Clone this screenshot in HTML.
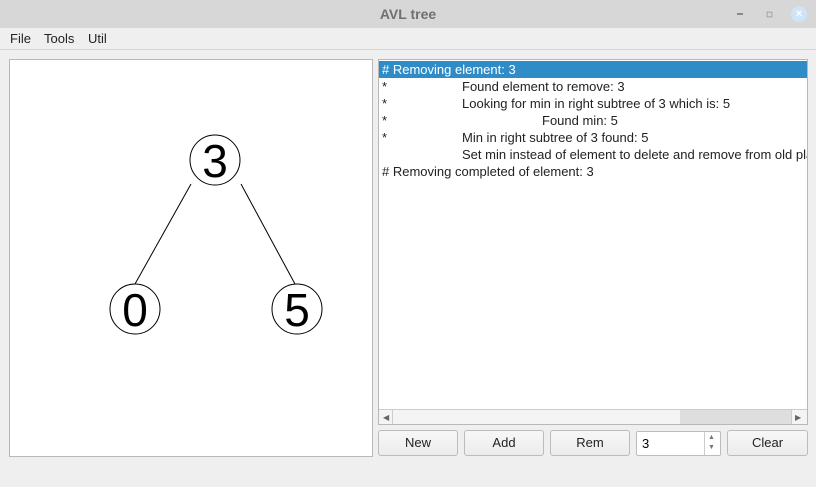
<!DOCTYPE html>
<html><head><style>
body{margin:0;width:816px;height:487px;background:#efefef;font-family:"Liberation Sans",sans-serif;position:relative;overflow:hidden}
.a{position:absolute}
.title{left:0;top:0;width:816px;height:28px;background:#d7d7d7;text-align:center;line-height:28px;font-weight:bold;font-size:14px;color:#707070}
.menu{top:28px;left:0;width:816px;height:21px;border-bottom:1px solid #d4d4d4;font-size:13px;color:#222}
.menu span{position:absolute;top:3px}
.panel{background:#fff;border:1px solid #b8b8b8}
.row{position:absolute;left:0;height:17px;line-height:17px;font-size:13px;color:#222;white-space:nowrap;width:428px}
.btn{top:430px;height:24px;border:1px solid #bcbcbc;border-radius:3px;background:linear-gradient(#f7f7f7,#ececec);font-size:13px;text-align:center;line-height:24px;color:#222}
</style></head><body>
<div class="a title">AVL tree</div>
<div class="a" style="left:737px;top:13px;width:6px;height:2px;background:#888"></div>
<div class="a" style="left:766px;top:11px;width:5px;height:5px;border:1px solid #999;transform:scale(.8)"></div>
<div class="a" style="left:791px;top:6px;width:16px;height:16px;border-radius:8px;background:#cfe5f7;color:#fff;font-size:11px;text-align:center;line-height:16px;font-weight:bold">×</div>
<div class="a menu"><span style="left:10px">File</span><span style="left:44px">Tools</span><span style="left:88px">Util</span></div>
<div class="a panel" style="left:9px;top:59px;width:362px;height:396px">
<svg width="362" height="396" style="position:absolute;left:0;top:0">
<g stroke="#000" stroke-width="1" fill="#fff">
<line x1="181" y1="124" x2="125" y2="224"/><line x1="231" y1="124" x2="285" y2="224"/>
<circle cx="205" cy="100" r="25"/><circle cx="125" cy="249" r="25"/><circle cx="287" cy="249" r="25"/>
</g>
<g font-family="Liberation Sans, sans-serif" font-size="46" text-anchor="middle" fill="#000">
<text x="205" y="117">3</text><text x="125" y="266">0</text><text x="287" y="266">5</text>
</g></svg></div>
<div class="a panel" style="left:378px;top:59px;width:428px;height:364px;overflow:hidden">
<div class="row" style="top:1px;background:#308cc6;color:#fff"><span class="a" style="left:3px"># Removing element: 3</span></div>
<div class="row" style="top:18px"><span class="a" style="left:3px">*</span><span class="a" style="left:83px">Found element to remove: 3</span></div>
<div class="row" style="top:35px"><span class="a" style="left:3px">*</span><span class="a" style="left:83px">Looking for min in right subtree of 3 which is: 5</span></div>
<div class="row" style="top:52px"><span class="a" style="left:3px">*</span><span class="a" style="left:163px">Found min: 5</span></div>
<div class="row" style="top:69px"><span class="a" style="left:3px">*</span><span class="a" style="left:83px">Min in right subtree of 3 found: 5</span></div>
<div class="row" style="top:86px"><span class="a" style="left:83px">Set min instead of element to delete and remove from old place</span></div>
<div class="row" style="top:103px"><span class="a" style="left:3px"># Removing completed of element: 3</span></div>
<div class="a" style="left:0;top:349px;width:428px;height:15px;background:#f4f4f4;border-top:1px solid #ccc"></div>
<div class="a" style="left:301px;top:350px;width:111px;height:14px;background:#dedede"></div>
<div class="a" style="left:13px;top:350px;width:1px;height:14px;background:#ccc"></div>
<div class="a" style="left:412px;top:350px;width:1px;height:14px;background:#ccc"></div>
<div class="a" style="left:4px;top:353px;font-size:8px;color:#666">◀</div>
<div class="a" style="left:416px;top:353px;font-size:8px;color:#666">▶</div>
</div>
<div class="a btn" style="left:378px;width:78px">New</div>
<div class="a btn" style="left:464px;width:78px">Add</div>
<div class="a btn" style="left:550px;width:78px">Rem</div>
<div class="a" style="left:636px;top:431px;width:83px;height:23px;background:#fff;border:1px solid #bcbcbc;border-radius:2px;font-size:13px;line-height:23px"><span style="padding-left:5px">3</span>
<div class="a" style="left:67px;top:0;width:1px;height:23px;background:#ccc"></div>
<div class="a" style="left:71px;top:1px;font-size:7px;color:#777;line-height:10px">▲<br>▼</div></div>
<div class="a btn" style="left:727px;width:79px">Clear</div>
</body></html>
